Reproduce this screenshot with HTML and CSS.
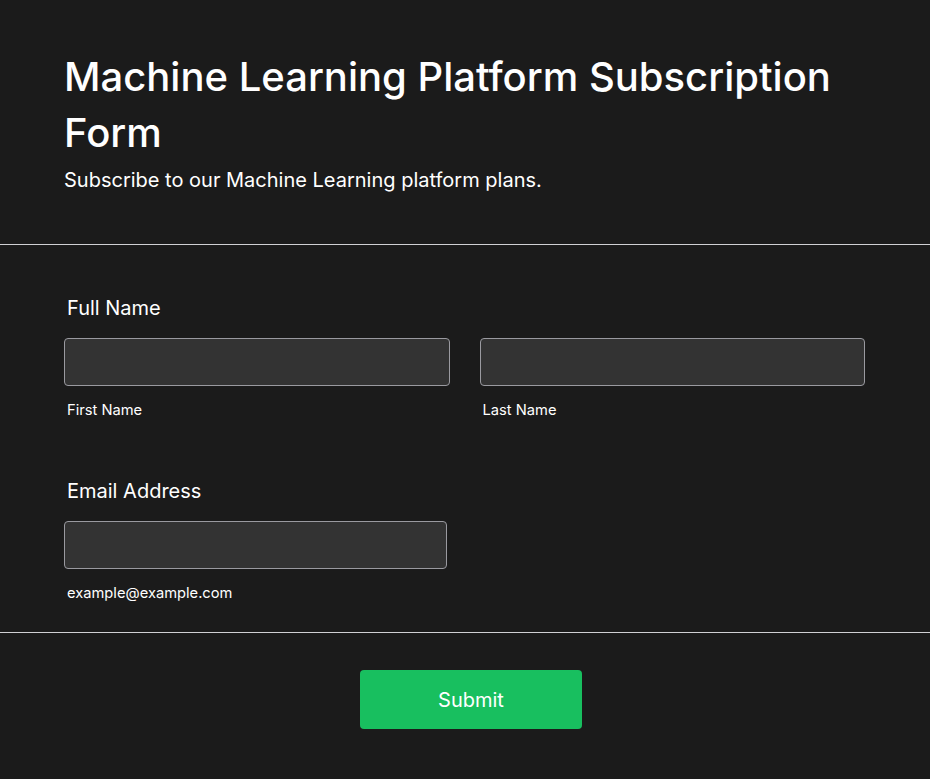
FILE: index.html
```html
<!DOCTYPE html>
<html>
<head>
  <title>Machine Learning Platform Subscription Form</title>
  <link rel="stylesheet" href="styles.css">
</head>
<body>
  <form class="form">
    <div class="form-header">
      <h1>Machine Learning Platform Subscription Form</h1>
      <p class="subtitle">Subscribe to our Machine Learning platform plans.</p>
    </div>
    <div class="form-body">
      <div class="field">
        <label class="field-label">Full Name</label>
        <div class="name-row">
          <div class="sub-field">
            <input type="text" id="firstName">
            <label class="sub-label" for="firstName">First Name</label>
          </div>
          <div class="sub-field">
            <input type="text" id="lastName">
            <label class="sub-label" for="lastName">Last Name</label>
          </div>
        </div>
      </div>
      <div class="field">
        <label class="field-label" for="email">Email Address</label>
        <div class="sub-field email">
          <input type="email" id="email">
          <label class="sub-label" for="email">example@example.com</label>
        </div>
      </div>
    </div>
    <div class="form-footer">
      <button type="submit" class="submit">Submit</button>
    </div>
  </form>
</body>
</html>
```

FILE: styles.css
```css
body {
  margin: 0;
  background-color: #1b1b1b;
  color: #fff;
  font-family: Inter, "Noto Sans", sans-serif;
}
.form {
  width: 930px;
}
.form-header {
  padding: 49px 64px 50px;
  border-bottom: 1px solid #d0d0d4;
}
.form-header h1 {
  margin: 0;
  font-size: 40px;
  font-weight: 500;
  line-height: 56px;
}
.subtitle {
  margin: 5px 0 0;
  font-size: 20px;
  line-height: 28px;
}
.form-body {
  padding: 50px 65px 30px 64px;
  border-bottom: 1px solid #d0d0d4;
}
.field {
  margin-bottom: 59px;
}
.field:last-child {
  margin-bottom: 0;
}
.field-label {
  display: block;
  padding-left: 3px;
  margin-bottom: 17px;
  font-size: 20px;
  font-weight: 400;
  line-height: 26px;
}
.name-row {
  display: flex;
  gap: 30px;
}
.sub-field {
  display: flex;
  flex-direction: column;
  flex: 1;
}
.sub-field.email {
  width: 383px;
}
.sub-field input {
  box-sizing: border-box;
  height: 48px;
  background-color: #333333;
  border: 1px solid #9a9aa0;
  border-radius: 4px;
  color: #fff;
  font-family: inherit;
  font-size: 16px;
  padding: 0 12px;
}
.sub-label {
  padding-left: 3px;
  margin-top: 15px;
  font-size: 14.7px;
  line-height: 18px;
}
.form-footer {
  display: flex;
  justify-content: center;
  padding: 37px 0 50px 12px;
}
.submit {
  width: 222px;
  height: 59px;
  background-color: #18bf5f;
  color: #fff;
  border: none;
  border-radius: 4px;
  font-family: inherit;
  font-size: 20px;
  font-weight: 400;
  cursor: pointer;
}
```
